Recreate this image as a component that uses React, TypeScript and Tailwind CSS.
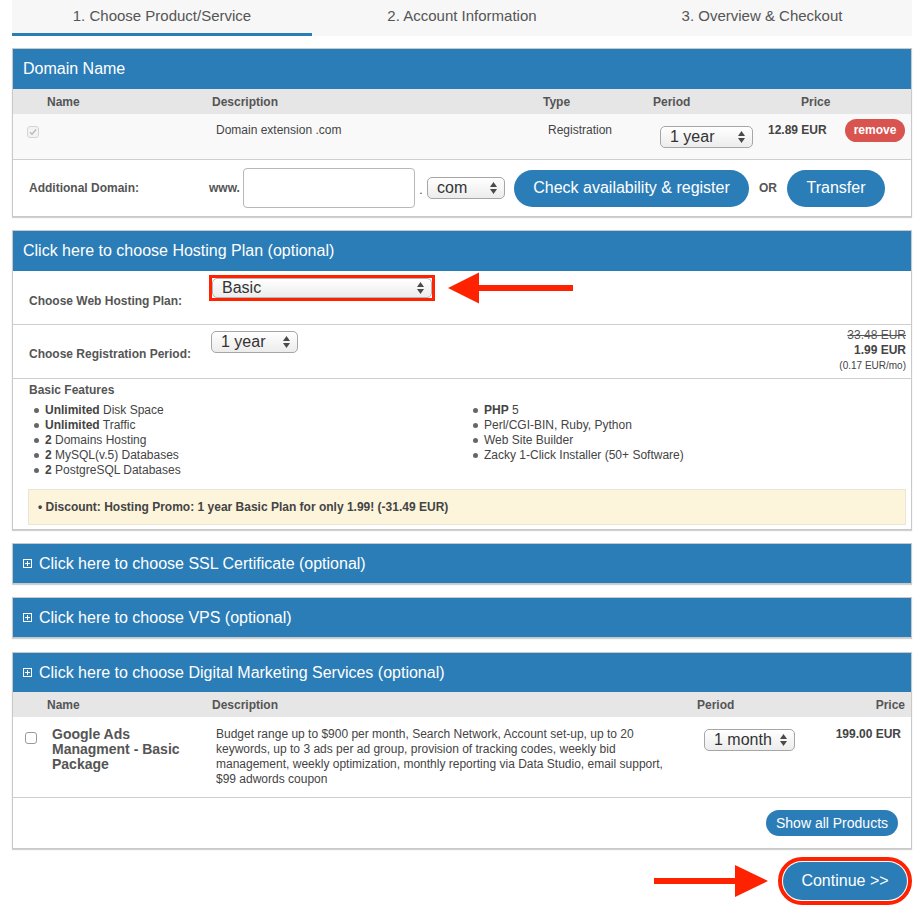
import React from "react";

const font = { fontFamily: '"Liberation Sans", Arial, Helvetica, sans-serif' };

function SelArrows() {
    return (
        <svg width="7" height="12" viewBox="0 0 7 12" className="shrink-0">
            <path d="M0 5 L3.5 0 L7 5 Z" fill="#4a4a4a" />
            <path d="M0 7 L7 7 L3.5 12 Z" fill="#4a4a4a" />
        </svg>
    );
}

function Sel({ value, className }: { value: string; className: string }) {
    return (
        <div
            className={`flex items-center justify-between border border-[#a6a6a6] rounded-[5px] bg-linear-to-b from-white to-[#ececec] pl-[9px] pr-[7px] text-[16px] leading-none text-[#333] ${className}`}
        >
            <span>{value}</span>
            <SelArrows />
        </div>
    );
}

function PlusBox() {
    return (
        <svg width="9" height="9" viewBox="0 0 9 9" className="mr-[7px] shrink-0">
            <rect x="0.5" y="0.5" width="8" height="8" fill="none" stroke="white" strokeWidth="1" />
            <path d="M2 4.5 H7 M4.5 2 V7" stroke="white" strokeWidth="1" />
        </svg>
    );
}

function PanelHeader({ title, plus }: { title: string; plus?: boolean }) {
    return (
        <div
            className={`${plus ? "h-[39px]" : "h-[40px]"} bg-[#2b7db7] flex items-center pl-[10px] text-white text-[16px]`}
        >
            {plus && <PlusBox />}
            {title}
        </div>
    );
}

function Bullet({ children }: { children: React.ReactNode }) {
    return (
        <li className="flex items-center leading-[15px]">
            <span className="w-[5px] h-[5px] rounded-full bg-[#666] mr-[6px] ml-[5px]" />
            <span>{children}</span>
        </li>
    );
}

export default function App() {
    return (
        <div className="w-[924px] min-h-[916px] bg-white text-[#444]" style={font}>
            <div className="w-[900px] ml-[12px]">
                {/* Steps */}
                <div className="flex bg-[#f7f7f7] h-[36px] text-[15px] text-[#555]">
                    <div className="w-[300px] flex items-center justify-center border-b-[3px] border-[#2b7db7]">
                        1. Choose Product/Service
                    </div>
                    <div className="w-[300px] flex items-center justify-center pb-[3px]">2. Account Information</div>
                    <div className="w-[300px] flex items-center justify-center pb-[3px]">3. Overview &amp; Checkout</div>
                </div>

                {/* Domain Name */}
                <div className="mt-[12px] border border-[#c9c9c9] shadow-[0_1px_1px_rgba(0,0,0,0.18)]">
                    <PanelHeader title="Domain Name" />
                    <div className="h-[25px] bg-[#e6e6e6] flex items-center text-[12px] font-bold text-[#555]">
                        <div className="w-[199px] pl-[34px]">Name</div>
                        <div className="w-[331px]">Description</div>
                        <div className="w-[110px]">Type</div>
                        <div className="w-[148px]">Period</div>
                        <div>Price</div>
                    </div>
                    <div className="h-[46px] bg-[#f9f9f9] flex items-start pt-[9px] text-[12px] leading-[15px] border-b border-[#cfcfcf]">
                        <div className="w-[203px] pl-[14px] pt-[3px]">
                            <div className="w-[12px] h-[12px] rounded-[3px] border border-[#d4d4d4] bg-[#f3f3f3] flex items-center justify-center">
                                <svg width="8" height="8" viewBox="0 0 8 8">
                                    <path d="M1 4.2 L3 6.2 L7 1.5" fill="none" stroke="#b8b8b8" strokeWidth="1.3" />
                                </svg>
                            </div>
                        </div>
                        <div className="w-[332px]">Domain extension .com</div>
                        <div className="w-[112px]">Registration</div>
                        <div className="w-[108px] pt-[3px]">
                            <Sel value="1 year" className="w-[93px] h-[22px]" />
                        </div>
                        <div className="w-[77px] font-bold">12.89 EUR</div>
                        <div className="-mt-[4px] w-[60px] h-[23px] rounded-full bg-[#d9534f] text-white font-bold flex items-center justify-center">
                            remove
                        </div>
                    </div>
                    <div className="h-[56px] flex items-center text-[12px]">
                        <div className="w-[196px] pl-[16px] font-bold text-[#555]">Additional Domain:</div>
                        <div className="w-[34px] font-bold text-[#555]">www.</div>
                        <div className="w-[172px] h-[40px] border border-[#b8b8b8] rounded-[4px] bg-white" />
                        <div className="w-[12px] text-center pt-[4px]">.</div>
                        <Sel value="com" className="w-[78px] h-[22px]" />
                        <div className="ml-[9px] w-[235px] h-[37px] rounded-full bg-[#2b7db7] text-white text-[16px] flex items-center justify-center">
                            Check availability &amp; register
                        </div>
                        <div className="ml-[10px] w-[18px] font-bold text-[#555]">OR</div>
                        <div className="ml-[10px] w-[98px] h-[37px] rounded-full bg-[#2b7db7] text-white text-[16px] flex items-center justify-center">
                            Transfer
                        </div>
                    </div>
                </div>

                {/* Hosting */}
                <div className="mt-[13px] border border-[#c9c9c9] shadow-[0_1px_1px_rgba(0,0,0,0.18)]">
                    <PanelHeader title="Click here to choose Hosting Plan (optional)" />
                    <div className="h-[54px] flex items-start pt-[4px] border-b border-[#cfcfcf]">
                        <div className="w-[196px] pl-[16px] self-center pt-[2px] text-[12px] font-bold text-[#555]">
                            Choose Web Hosting Plan:
                        </div>
                        <div className="border-[3px] border-[#ff2200] w-[226px] h-[26px]">
                            <Sel value="Basic" className="w-[220px] h-[20px] rounded-[3px] border-[#b5b5b5]" />
                        </div>
                        <svg width="126" height="32" viewBox="0 0 126 32" className="ml-[13px] -mt-[3px]">
                            <path d="M0 16 L31 0.5 L31 31.5 Z" fill="#ff2200" />
                            <rect x="30" y="13" width="95" height="6" fill="#ff2200" />
                        </svg>
                    </div>
                    <div className="h-[54px] flex items-start border-b border-[#cfcfcf]">
                        <div className="w-[198px] pl-[16px] self-center pt-[4px] text-[12px] font-bold text-[#555]">
                            Choose Registration Period:
                        </div>
                        <Sel value="1 year" className="mt-[6px] w-[87px] h-[22px]" />
                        <div className="ml-auto pr-[5px] pt-[3px] text-right text-[12px] leading-[15px]">
                            <div className="line-through text-[#555]">33.48 EUR</div>
                            <div className="font-bold">1.99 EUR</div>
                            <div className="text-[10px]">(0.17 EUR/mo)</div>
                        </div>
                    </div>
                    <div className="pt-[4px] pb-[4px] text-[12px]">
                        <div className="pl-[16px] font-bold text-[#555] leading-[15px]">Basic Features</div>
                        <div className="flex mt-[5px] pl-[16px]">
                            <ul className="w-[439px]">
                                <Bullet>
                                    <b>Unlimited</b> Disk Space
                                </Bullet>
                                <Bullet>
                                    <b>Unlimited</b> Traffic
                                </Bullet>
                                <Bullet>
                                    <b>2</b> Domains Hosting
                                </Bullet>
                                <Bullet>
                                    <b>2</b> MySQL(v.5) Databases
                                </Bullet>
                                <Bullet>
                                    <b>2</b> PostgreSQL Databases
                                </Bullet>
                            </ul>
                            <ul>
                                <Bullet>
                                    <b>PHP</b> 5
                                </Bullet>
                                <Bullet>Perl/CGI-BIN, Ruby, Python</Bullet>
                                <Bullet>Web Site Builder</Bullet>
                                <Bullet>Zacky 1-Click Installer (50+ Software)</Bullet>
                            </ul>
                        </div>
                        <div className="mt-[11px] ml-[15px] mr-[5px] h-[36px] bg-[#fdf4dc] border border-[#ebe5d4] flex items-center pl-[9px] font-bold text-[#444]">
                            • Discount: Hosting Promo: 1 year Basic Plan for only 1.99! (-31.49 EUR)
                        </div>
                    </div>
                </div>

                {/* SSL */}
                <div className="mt-[13px] border border-[#c9c9c9] shadow-[0_1px_1px_rgba(0,0,0,0.18)]">
                    <PanelHeader title="Click here to choose SSL Certificate (optional)" plus />
                </div>

                {/* VPS */}
                <div className="mt-[13px] border border-[#c9c9c9] shadow-[0_1px_1px_rgba(0,0,0,0.18)]">
                    <PanelHeader title="Click here to choose VPS (optional)" plus />
                </div>

                {/* Digital marketing */}
                <div className="mt-[14px] border border-[#c9c9c9] shadow-[0_1px_1px_rgba(0,0,0,0.18)]">
                    <PanelHeader title="Click here to choose Digital Marketing Services (optional)" plus />
                    <div className="h-[25px] bg-[#e6e6e6] flex items-center text-[12px] font-bold text-[#555]">
                        <div className="w-[199px] pl-[34px]">Name</div>
                        <div className="w-[485px]">Description</div>
                        <div>Period</div>
                        <div className="ml-auto pr-[6px]">Price</div>
                    </div>
                    <div className="h-[81px] flex items-start pt-[10px] border-b border-[#cfcfcf]">
                        <div className="w-[39px] pl-[12px] pt-[5px]">
                            <div className="w-[12px] h-[12px] rounded-[3px] border border-[#9a9a9a] bg-white" />
                        </div>
                        <div className="w-[164px] text-[14px] font-bold leading-[15px] text-[#555]">
                            Google Ads
                            <br />
                            Managment - Basic
                            <br />
                            Package
                        </div>
                        <div className="w-[488px] text-[12px] leading-[15px] text-[#444]">
                            Budget range up to $900 per month, Search Network, Account set-up, up to 20
                            <br />
                            keywords, up to 3 ads per ad group, provision of tracking codes, weekly bid
                            <br />
                            management, weekly optimization, monthly reporting via Data Studio, email support,
                            <br />
                            $99 adwords coupon
                        </div>
                        <Sel value="1 month" className="mt-[2px] w-[91px] h-[22px]" />
                        <div className="ml-auto pr-[10px] text-[12px] font-bold leading-[15px]">199.00 EUR</div>
                    </div>
                    <div className="h-[50px] flex items-center justify-end pr-[13px]">
                        <div className="w-[132px] h-[26px] rounded-full bg-[#2b7db7] text-white text-[14px] flex items-center justify-center">
                            Show all Products
                        </div>
                    </div>
                </div>

                {/* Continue */}
                <div className="mt-[8px] flex items-center justify-end">
                    <svg width="116" height="34" viewBox="0 0 116 34" className="mr-[8px]">
                        <rect x="0" y="14" width="84" height="6" fill="#ff2200" />
                        <path d="M81 1 L114 17 L81 33 Z" fill="#ff2200" />
                    </svg>
                    <div className="w-[134px] h-[48px] rounded-full border-[4px] border-[#ff2200] p-[1px]">
                        <div className="w-full h-full rounded-full bg-[#2b7db7] text-white text-[16px] flex items-center justify-center">
                            Continue &gt;&gt;
                        </div>
                    </div>
                </div>
            </div>
        </div>
    );
}
